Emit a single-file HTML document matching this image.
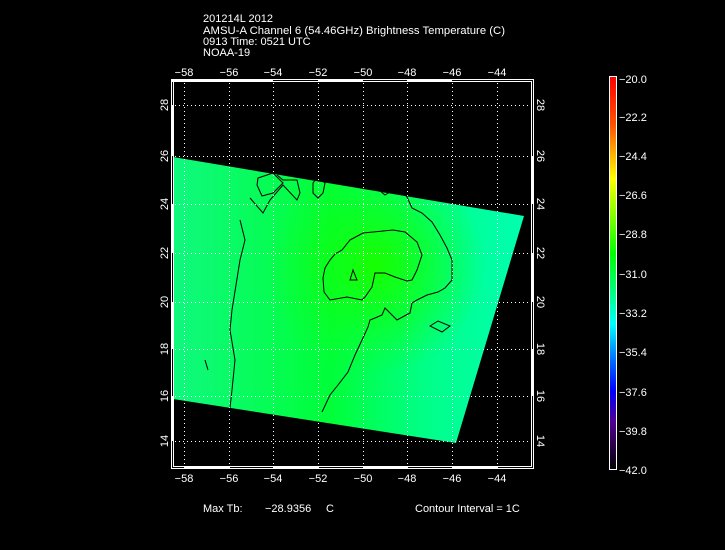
<!DOCTYPE html>
<html><head><style>
body{margin:0;background:#000;width:725px;height:550px;overflow:hidden;font-family:"Liberation Sans",sans-serif;}
</style></head><body>
<svg width="725" height="550" xmlns="http://www.w3.org/2000/svg" style="position:absolute;left:0;top:0">
<defs>
<linearGradient id="cb" x1="0" y1="0" x2="0" y2="1">
<stop offset="0" stop-color="#ff0000"/><stop offset="0.12" stop-color="#ff5000"/><stop offset="0.26" stop-color="#ffff00"/><stop offset="0.38" stop-color="#60ff00"/><stop offset="0.45" stop-color="#00ff00"/><stop offset="0.55" stop-color="#00ff80"/><stop offset="0.63" stop-color="#00ffff"/><stop offset="0.72" stop-color="#0070ff"/><stop offset="0.8" stop-color="#0000ff"/><stop offset="0.88" stop-color="#500090"/><stop offset="1" stop-color="#000000"/>
</linearGradient>
<linearGradient id="bg" x1="173" y1="0" x2="524" y2="0" gradientUnits="userSpaceOnUse">
<stop offset="0" stop-color="#10f880"/><stop offset="0.2" stop-color="#08fc60"/><stop offset="0.45" stop-color="#00ff38"/><stop offset="0.72" stop-color="#00ff88"/><stop offset="1" stop-color="#00ffb0"/>
</linearGradient>
<radialGradient id="core" cx="375" cy="265" r="110" gradientUnits="userSpaceOnUse">
<stop offset="0" stop-color="#18ff00" stop-opacity="1"/><stop offset="0.5" stop-color="#10ff10" stop-opacity="0.6"/><stop offset="1" stop-color="#10ff20" stop-opacity="0"/>
</radialGradient>
</defs>
<g font-size="11" fill="#fff">
<text x="203" y="22">201214L 2012</text>
<text x="203" y="34" textLength="302" lengthAdjust="spacingAndGlyphs">AMSU-A Channel 6 (54.46GHz) Brightness Temperature (C)</text>
<text x="203" y="45">0913 Time: 0521 UTC</text>
<text x="203" y="56">NOAA-19</text>
</g>
<polygon points="173,157 524,216 456,443 173,399" fill="url(#bg)"/>
<polygon points="173,157 524,216 456,443 173,399" fill="url(#core)"/>
<g fill="none" stroke="#000" stroke-width="1">
<path d="M350,240 L363,233 L383,231 L393,230 L405,232 L417,242 L422,255 L417,270 L412,280 L407,281 L395,277 L385,273 L375,273 L372,287 L365,297 L362,300 L347,297 L330,300 L324,292 L323,278 L325,268 L330,260 L335,254 L342,250 Z"/>
<path d="M350,280 L353,270 L357,280 Z"/>
<path d="M258,178 L273,173 L283,183 L273,193 L262,196 L257,185 Z"/>
<path d="M277,175 L283,180 L297,180 L300,193 L297,200 L283,185 L270,200 L263,213 L250,198"/>
<path d="M313,183 L318,176 L325,183 L323,193 L318,198 L313,193 Z"/>
<path d="M373,185 L385,195 L393,190 L403,192 L407,197 L412,208 L422,213 L432,222 L440,235 L447,248 L452,260 L452,280 L445,288 L438,292 L427,295 L417,300 L412,303 L410,313 L397,320 L390,313 L385,308 L382,315 L375,318 L370,320 L368,327 L362,340 L355,355 L348,372 L338,385 L330,395 L322,412"/>
<path d="M430,326 L438,321 L450,326 L442,332 Z"/>
<path d="M240,220 L245,240 L240,260 L236,285 L232,310 L230,330 L235,360 L232,390 L230,408"/>
<path d="M205,360 L208,370"/>
</g>
<g stroke="#fff" stroke-dasharray="1,3" stroke-width="1">
<line x1="184.5" y1="79" x2="184.5" y2="468"/><line x1="229.5" y1="79" x2="229.5" y2="468"/><line x1="273.5" y1="79" x2="273.5" y2="468"/><line x1="318.5" y1="79" x2="318.5" y2="468"/><line x1="363.5" y1="79" x2="363.5" y2="468"/><line x1="407.5" y1="79" x2="407.5" y2="468"/><line x1="452.5" y1="79" x2="452.5" y2="468"/><line x1="497.5" y1="79" x2="497.5" y2="468"/>
<line x1="171" y1="105.5" x2="533" y2="105.5"/><line x1="171" y1="156.5" x2="533" y2="156.5"/><line x1="171" y1="204.5" x2="533" y2="204.5"/><line x1="171" y1="253.5" x2="533" y2="253.5"/><line x1="171" y1="302.5" x2="533" y2="302.5"/><line x1="171" y1="349.5" x2="533" y2="349.5"/><line x1="171" y1="396.5" x2="533" y2="396.5"/><line x1="171" y1="441.5" x2="533" y2="441.5"/>
</g>
<rect x="171.5" y="79.5" width="362" height="389" fill="none" stroke="#fff"/>
<rect x="173.5" y="81.5" width="358" height="385" fill="none" stroke="#fff"/>
<rect x="171" y="79" width="102" height="3" fill="#fff"/>
<rect x="318" y="79" width="45" height="3" fill="#fff"/>
<rect x="407" y="79" width="45" height="3" fill="#fff"/>
<rect x="184" y="466" width="45" height="3" fill="#fff"/>
<rect x="273" y="466" width="45" height="3" fill="#fff"/>
<rect x="363" y="466" width="45" height="3" fill="#fff"/>
<rect x="452" y="466" width="45" height="3" fill="#fff"/>
<rect x="171" y="105" width="3" height="51" fill="#fff"/>
<rect x="171" y="204" width="3" height="49" fill="#fff"/>
<rect x="171" y="302" width="3" height="47" fill="#fff"/>
<rect x="171" y="396" width="3" height="45" fill="#fff"/>
<rect x="531" y="156" width="3" height="48" fill="#fff"/>
<rect x="531" y="253" width="3" height="49" fill="#fff"/>
<rect x="531" y="349" width="3" height="47" fill="#fff"/>
<g font-size="11" fill="#fff" text-anchor="middle">
<text x="184" y="76">−58</text><text x="229" y="76">−56</text><text x="273" y="76">−54</text><text x="318" y="76">−52</text><text x="363" y="76">−50</text><text x="407" y="76">−48</text><text x="452" y="76">−46</text><text x="497" y="76">−44</text>
<text x="184" y="482">−58</text><text x="229" y="482">−56</text><text x="273" y="482">−54</text><text x="318" y="482">−52</text><text x="363" y="482">−50</text><text x="407" y="482">−48</text><text x="452" y="482">−46</text><text x="497" y="482">−44</text>
</g>
<g font-size="11" fill="#fff" text-anchor="middle">
<text transform="translate(168,105) rotate(-90)">28</text><text transform="translate(168,156) rotate(-90)">26</text><text transform="translate(168,204) rotate(-90)">24</text><text transform="translate(168,253) rotate(-90)">22</text><text transform="translate(168,302) rotate(-90)">20</text><text transform="translate(168,349) rotate(-90)">18</text><text transform="translate(168,396) rotate(-90)">16</text><text transform="translate(168,441) rotate(-90)">14</text>
<text transform="translate(537,105) rotate(90)">28</text><text transform="translate(537,156) rotate(90)">26</text><text transform="translate(537,204) rotate(90)">24</text><text transform="translate(537,253) rotate(90)">22</text><text transform="translate(537,302) rotate(90)">20</text><text transform="translate(537,349) rotate(90)">18</text><text transform="translate(537,396) rotate(90)">16</text><text transform="translate(537,441) rotate(90)">14</text>
</g>
<rect x="609.5" y="76.5" width="7" height="393" fill="url(#cb)" stroke="#fff"/>
<g font-size="11" fill="#fff">
<text x="619" y="83">−20.0</text><text x="619" y="121">−22.2</text><text x="619" y="160">−24.4</text><text x="619" y="199">−26.6</text><text x="619" y="238">−28.8</text><text x="619" y="278">−31.0</text><text x="619" y="317">−33.2</text><text x="619" y="356">−35.4</text><text x="619" y="396">−37.6</text><text x="619" y="435">−39.8</text><text x="619" y="474">−42.0</text>
<text x="203" y="512">Max Tb:</text><text x="265" y="512">−28.9356</text><text x="326" y="512">C</text>
<text x="415" y="512">Contour Interval = 1C</text>
</g>
</svg>
</body></html>
